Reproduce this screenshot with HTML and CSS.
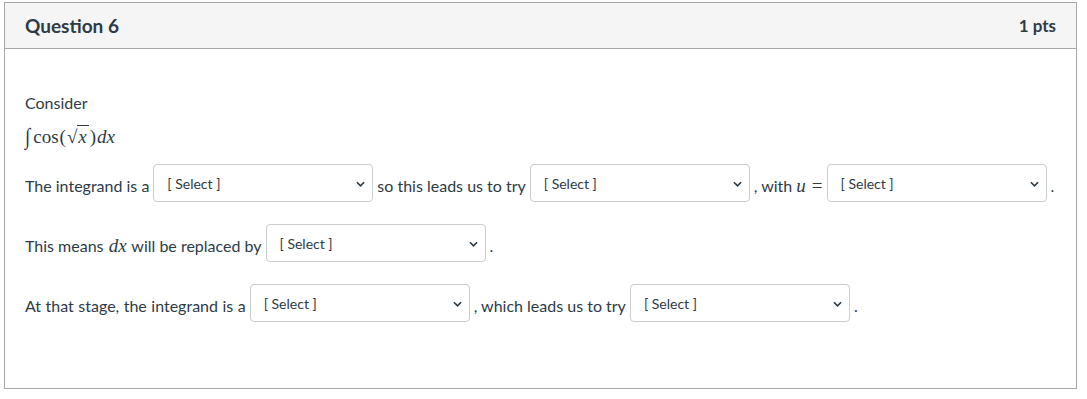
FILE: index.html
```html
<!DOCTYPE html>
<html lang="en">
<head>
  <meta charset="UTF-8" />
  <title>Question 6</title>
  <link rel="stylesheet" href="styles.css">
</head>
<body>
  <div class="question">
    <div class="question-header">
      <span class="question-title">Question 6</span>
      <span class="question-points">1 pts</span>
    </div>

    <div class="question-text">
      <p class="intro">Consider</p>
      <p class="formula">
        <span class="math"><span class="integral">&int;</span>cos<span class="paren">(</span><span class="sqrt"><span class="radical">&radic;</span><span class="radicand"><i>x</i></span></span><span class="paren">)</span><i>dx</i></span>
      </p>

      <div class="blank-row">
        <span class="txt">The integrand is a</span>
        <span class="dropdown"><select><option>[ Select ]</option></select><svg class="chevron" viewBox="0 0 10 6"><path d="M1 1l4 4 4-4"/></svg></span>
        <span class="txt">so this leads us to try</span>
        <span class="dropdown"><select><option>[ Select ]</option></select><svg class="chevron" viewBox="0 0 10 6"><path d="M1 1l4 4 4-4"/></svg></span>
        <span class="txt">, with <span class="math"><i>u</i><span class="eq">=</span></span></span>
        <span class="dropdown tight"><select><option>[ Select ]</option></select><svg class="chevron" viewBox="0 0 10 6"><path d="M1 1l4 4 4-4"/></svg></span>
        <span class="txt">.</span>
      </div>

      <div class="blank-row">
        <span class="txt">This means <span class="math inline-dx"><i>dx</i></span> will be replaced by</span>
        <span class="dropdown"><select><option>[ Select ]</option></select><svg class="chevron" viewBox="0 0 10 6"><path d="M1 1l4 4 4-4"/></svg></span>
        <span class="txt">.</span>
      </div>

      <div class="blank-row">
        <span class="txt spaced">At that stage, the integrand is a</span>
        <span class="dropdown"><select><option>[ Select ]</option></select><svg class="chevron" viewBox="0 0 10 6"><path d="M1 1l4 4 4-4"/></svg></span>
        <span class="txt">, which leads us to try</span>
        <span class="dropdown"><select><option>[ Select ]</option></select><svg class="chevron" viewBox="0 0 10 6"><path d="M1 1l4 4 4-4"/></svg></span>
        <span class="txt">.</span>
      </div>
    </div>
  </div>
</body>
</html>
```

FILE: styles.css
```css
/* Colores base de la pregunta */
:root {
  --text-color: #2d3b45;
  --border-color: #a8a8a8;
  --header-bg: #f5f5f5;
  --input-border: #c7cdd1;
  --font-family: 'Lato', 'Noto Sans', sans-serif;
  --math-font: 'Liberation Serif', 'DejaVu Serif', serif;
}

body {
  margin: 2px 10px 0 4px;
  font-family: var(--font-family);
  color: var(--text-color);
  background: #fff;
}

.question {
  border: 1px solid var(--border-color);
  height: 387px;
  box-sizing: border-box;
}

.question-header {
  display: flex;
  justify-content: space-between;
  align-items: center;
  height: 46px;
  padding: 0 20px;
  background: var(--header-bg);
  border-bottom: 1px solid var(--border-color);
  box-sizing: border-box;
}

.question-title {
  font-size: 19px;
  font-weight: 700;
}

.question-points {
  font-size: 17px;
  font-weight: 700;
}

.question-text {
  padding: 44px 20px 0;
  font-size: 16px;
}

.question-text p {
  margin: 0;
}

.intro {
  line-height: 20px;
  margin-bottom: 12px !important;
}

.formula {
  line-height: 24px;
  margin-bottom: 15px !important;
}

/* Filas con huecos para rellenar */
.blank-row {
  display: flex;
  align-items: center;
  height: 38px;
  margin-bottom: 22px;
  white-space: pre;
}

.txt {
  line-height: 20px;
  padding-top: 6px;
}

.txt.spaced {
  word-spacing: 0.4px;
}

/* Fórmulas */
.math {
  font-family: var(--math-font);
  font-size: 19px;
}

.math i {
  font-style: italic;
}

.inline-dx {
  margin: 0 1px;
}

.eq {
  margin-left: 6px;
}

.integral {
  display: inline-block;
  font-style: italic;
  transform: scaleY(1.2);
  margin-right: 3px;
}

.paren {
  margin: 0 1px;
}

.radical {
  font-size: 19px;
}

.radicand {
  border-top: 1px solid var(--text-color);
  padding: 0 2px 0 1px;
}

/* Selectores */
.dropdown {
  position: relative;
  margin: 0 4px;
}

.dropdown.tight {
  margin-left: 4px;
}

.dropdown select {
  appearance: none;
  -webkit-appearance: none;
  display: block;
  width: 220px;
  height: 38px;
  padding: 0 30px 0 13px;
  border: 1px solid var(--input-border);
  border-radius: 4px;
  background: #fff;
  color: var(--text-color);
  font-family: var(--font-family);
  font-size: 14px;
}

.chevron {
  position: absolute;
  right: 8px;
  top: 17px;
  width: 9px;
  height: 6px;
  fill: none;
  stroke: #2d3b45;
  stroke-width: 1.8;
  pointer-events: none;
}
```
